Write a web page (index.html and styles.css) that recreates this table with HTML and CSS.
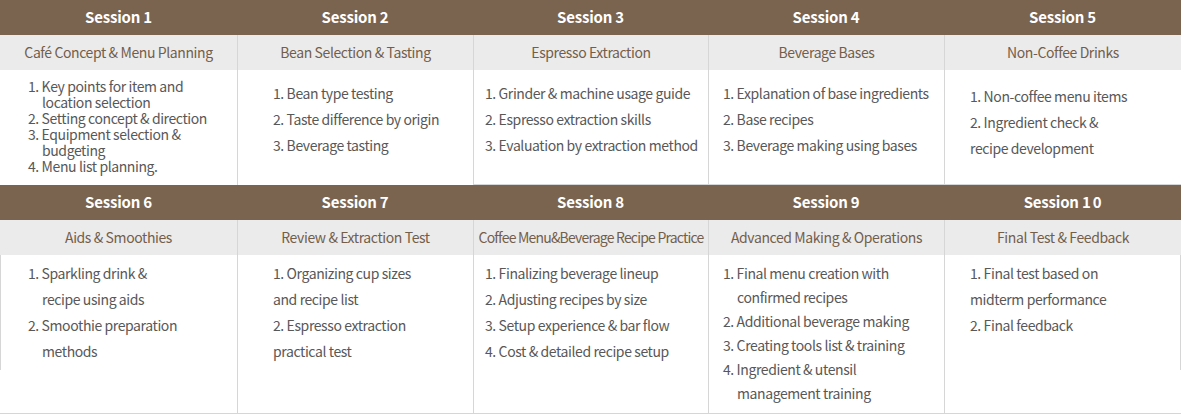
FILE: index.html
```html
<!DOCTYPE html>
<html lang="en">
<head>
<meta charset="utf-8">
<title>Barista Course Sessions</title>
<link rel="stylesheet" href="styles.css">
</head>
<body>
<div class="schedule">
  <section class="grid row1">
    <div class="head">Session 1</div>
    <div class="head">Session 2</div>
    <div class="head">Session 3</div>
    <div class="head">Session 4</div>
    <div class="head">Session 5</div>

    <div class="sub">Café Concept &amp; Menu Planning</div>
    <div class="sub div">Bean Selection &amp; Tasting</div>
    <div class="sub div">Espresso Extraction</div>
    <div class="sub div">Beverage Bases</div>
    <div class="sub div">Non-Coffee Drinks</div>

    <div class="body c1 tight">
      <p>1. Key points for item and</p>
      <p class="cont">location selection</p>
      <p>2. Setting concept &amp; direction</p>
      <p>3. Equipment selection &amp;</p>
      <p class="cont">budgeting</p>
      <p>4. Menu list planning.</p>
    </div>
    <div class="body div c2">
      <p>1. Bean type testing</p>
      <p>2. Taste difference by origin</p>
      <p>3. Beverage tasting</p>
    </div>
    <div class="body div c3 line">
      <p>1. Grinder &amp; machine usage guide</p>
      <p>2. Espresso extraction skills</p>
      <p>3. Evaluation by extraction method</p>
    </div>
    <div class="body div c4 line">
      <p>1. Explanation of base ingredients</p>
      <p>2. Base recipes</p>
      <p>3. Beverage making using bases</p>
    </div>
    <div class="body div c5 line low">
      <p>1. Non-coffee menu items</p>
      <p>2. Ingredient check &amp;</p>
      <p>recipe development</p>
    </div>
  </section>

  <section class="grid row2">
    <div class="head">Session 6</div>
    <div class="head">Session 7</div>
    <div class="head">Session 8</div>
    <div class="head">Session 9</div>
    <div class="head">Session 1<span class="gap">0</span></div>

    <div class="sub">Aids &amp; Smoothies</div>
    <div class="sub div">Review &amp; Extraction Test</div>
    <div class="sub div narrow">Coffee Menu&amp;Beverage Recipe Practice</div>
    <div class="sub div">Advanced Making &amp; Operations</div>
    <div class="sub div">Final Test &amp; Feedback</div>

    <div class="body c1 edge-left">
      <p>1. Sparkling drink &amp;</p>
      <p class="cont">recipe using aids</p>
      <p>2. Smoothie preparation</p>
      <p class="cont">methods</p>
    </div>
    <div class="body div c2">
      <p>1. Organizing cup sizes</p>
      <p>and recipe list</p>
      <p>2. Espresso extraction</p>
      <p>practical test</p>
    </div>
    <div class="body div c3">
      <p>1. Finalizing beverage lineup</p>
      <p>2. Adjusting recipes by size</p>
      <p>3. Setup experience &amp; bar flow</p>
      <p>4. Cost &amp; detailed recipe setup</p>
    </div>
    <div class="body div c4 mid">
      <p>1. Final menu creation with</p>
      <p class="cont">confirmed recipes</p>
      <p>2. Additional beverage making</p>
      <p>3. Creating tools list &amp; training</p>
      <p>4. Ingredient &amp; utensil</p>
      <p class="cont">management training</p>
    </div>
    <div class="body div c5 edge-right">
      <p>1. Final test based on</p>
      <p>midterm performance</p>
      <p>2. Final feedback</p>
    </div>
  </section>
</div>
</body>
</html>
```

FILE: styles.css
```css
* { box-sizing: border-box; }

html, body {
  margin: 0;
  padding: 0;
  background: #ffffff;
}

body {
  font-family: "Noto Sans CJK KR", "Noto Sans", sans-serif;
  width: 1181px;
}

.schedule {
  display: flex;
  flex-direction: column;
  width: 1181px;
}

.grid {
  display: grid;
  grid-template-columns: 237px 236px 235px 236px 237px;
}

.head {
  height: 35px;
  padding-bottom: 2px;
  background: #7a6450;
  color: #ffffff;
  font-weight: 700;
  font-size: 15px;
  display: flex;
  align-items: center;
  justify-content: center;
  letter-spacing: -0.2px;
}

.head .gap {
  margin-left: 2px;
}

.sub {
  height: 35px;
  padding-bottom: 2px;
  background: #ebebeb;
  color: #735e4b;
  font-size: 14px;
  display: flex;
  align-items: center;
  justify-content: center;
  letter-spacing: -0.4px;
}

.sub.narrow {
  letter-spacing: -0.8px;
}

.div {
  border-left: 1px solid #d6d6d6;
}

.body {
  font-size: 14px;
  color: #585858;
  line-height: 26px;
  letter-spacing: -0.4px;
  background: #ffffff;
}

.body p {
  margin: 0;
  white-space: nowrap;
}

.body .cont {
  padding-left: 14px;
}

.row1 .body {
  height: 115px;
  padding-top: 10px;
}

.row1 .body.line {
  border-bottom: 1px solid #d6d6d6;
}

.row1 .body.tight {
  line-height: 16px;
  padding-top: 8px;
}

.row1 .body.low {
  padding-top: 13px;
}

.row2 .body {
  height: 159px;
  padding-top: 5px;
  border-bottom: 1px solid #d6d6d6;
}

.row2 .body.mid {
  line-height: 24px;
  padding-top: 6px;
}

.c1 { padding-left: 28px; }
.c2 { padding-left: 35px; }
.c3 { padding-left: 11px; }
.c4 { padding-left: 14px; }
.c5 { padding-left: 25px; }

.edge-left {
  background-image: linear-gradient(#d6d6d6, #d6d6d6);
  background-size: 1px 115px;
  background-repeat: no-repeat;
  background-position: 0 0;
}

.edge-right {
  background-image: linear-gradient(#d6d6d6, #d6d6d6);
  background-size: 1px 115px;
  background-repeat: no-repeat;
  background-position: right 0 top 0;
}
```
